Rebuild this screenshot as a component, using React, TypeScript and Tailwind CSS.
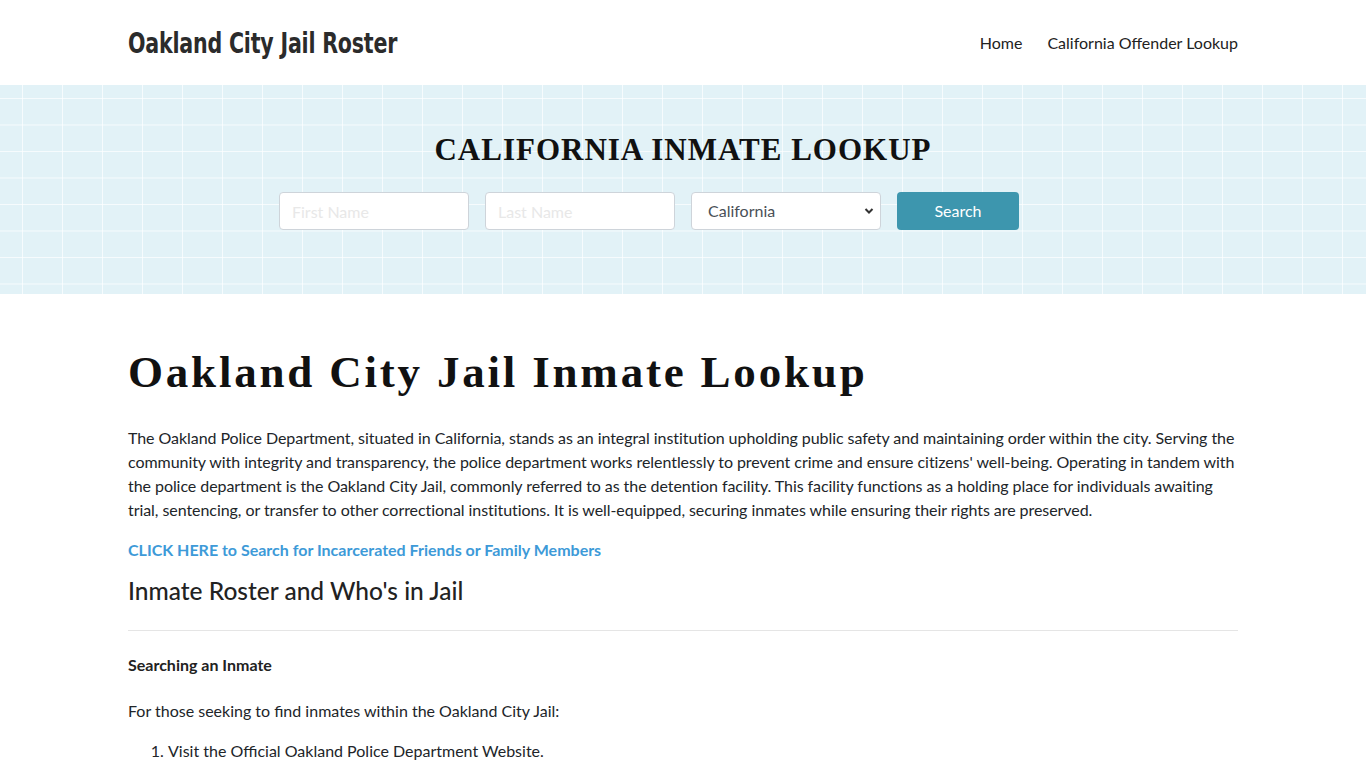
export default function App() {
  return (
    <div className="min-h-screen bg-white font-['Lato','Noto_Sans',sans-serif] text-[16px] leading-6 text-[#212529]">
      <header className="h-[85px] bg-white">
        <div className="mx-auto flex h-full w-[1110px] items-center justify-between">
          <a className="inline-block origin-left [transform:scaleX(0.71)] font-['DejaVu_Sans',sans-serif] text-[29px] font-bold tracking-[-0.3px] whitespace-nowrap text-[#2b2b2b]">
            Oakland City Jail Roster
          </a>
          <nav className="flex items-center gap-[25px] text-[16px] text-[#222]">
            <a>Home</a>
            <a>California Offender Lookup</a>
          </nav>
        </div>
      </header>

      <section className="h-[209px] bg-[#e2f2f7] bg-[linear-gradient(to_right,rgba(255,255,255,0.7)_1px,transparent_1px),linear-gradient(to_bottom,rgba(255,255,255,0.7)_1px,transparent_1px)] bg-[size:40px_26.5px] bg-[position:22px_13px]">
        <div className="mx-auto w-[1110px] pt-[46px]">
          <h2 className="text-center font-['Liberation_Serif','Times_New_Roman',serif] text-[31px] font-bold leading-[38px] tracking-[1px] text-[#111]">
            CALIFORNIA INMATE LOOKUP
          </h2>
          <form className="mt-[23px] flex gap-4 pl-[151px]">
            <input
              placeholder="First Name"
              className="h-[38px] w-[190px] rounded border border-[#ced4da] bg-white px-3 text-[16px] placeholder:text-[#e8e8e8] outline-none"
            />
            <input
              placeholder="Last Name"
              className="h-[38px] w-[190px] rounded border border-[#ced4da] bg-white px-3 text-[16px] placeholder:text-[#e8e8e8] outline-none"
            />
            <div className="relative h-[38px] w-[190px] rounded border border-[#ced4da] bg-white">
              <span className="absolute left-4 top-[6px] text-[16px] text-[#495057]">California</span>
              <svg
                className="absolute right-[6px] top-[14px]"
                width="10"
                height="8"
                viewBox="0 0 10 8"
              >
                <path d="M1.5 2l3.5 3.5L8.5 2" fill="none" stroke="#333" strokeWidth="2" />
              </svg>
            </div>
            <button
              type="button"
              className="h-[38px] w-[122px] rounded bg-[#3d96ae] text-[16px] text-white"
            >
              Search
            </button>
          </form>
        </div>
      </section>

      <main className="mx-auto w-[1110px] pt-[51px]">
        <h1 className="font-['Liberation_Serif','Times_New_Roman',serif] text-[45px] font-bold leading-[54px] tracking-[2.8px] text-[#111]">
          Oakland City Jail Inmate Lookup
        </h1>
        <p className="mt-[27px] tracking-[-0.06px]">
          The Oakland Police Department, situated in California, stands as an integral institution upholding public safety and maintaining order within the city. Serving the community with integrity and transparency, the police department works relentlessly to prevent crime and ensure citizens' well-being. Operating in tandem with the police department is the Oakland City Jail, commonly referred to as the detention facility. This facility functions as a holding place for individuals awaiting trial, sentencing, or transfer to other correctional institutions. It is well-equipped, securing inmates while ensuring their rights are preserved.
        </p>
        <p className="mt-4">
          <a className="font-bold text-[#3d9ad8]">
            CLICK HERE to Search for Incarcerated Friends or Family Members
          </a>
        </p>
        <h3 className="mt-[14px] text-[24.5px] font-medium leading-[30px] text-[#222]">
          Inmate Roster and Who's in Jail
        </h3>
        <hr className="mt-[24px] border-t border-[#e5e5e5]" />
        <h4 className="mt-[22px] font-bold text-[#222]">Searching an Inmate</h4>
        <p className="mt-[22px]">For those seeking to find inmates within the Oakland City Jail:</p>
        <ol className="mt-4 list-decimal pl-10">
          <li>Visit the Official Oakland Police Department Website.</li>
        </ol>
      </main>
    </div>
  );
}
